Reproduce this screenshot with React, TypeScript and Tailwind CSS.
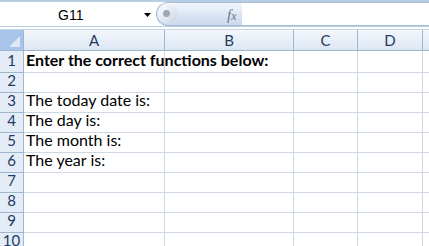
import React from "react";

const cols = [
  { name: "A", w: 141 },
  { name: "B", w: 129 },
  { name: "C", w: 64 },
  { name: "D", w: 65 },
  { name: "", w: 40 },
];

const rows: { n: number; text?: string; bold?: boolean; h: number }[] = [
  { n: 1, text: "Enter the correct functions below:", bold: true, h: 22 },
  { n: 2, h: 20 },
  { n: 3, text: "The today date is:", h: 20 },
  { n: 4, text: "The day is:", h: 20 },
  { n: 5, text: "The month is:", h: 20 },
  { n: 6, text: "The year is:", h: 20 },
  { n: 7, h: 20 },
  { n: 8, h: 20 },
  { n: 9, h: 20 },
  { n: 10, h: 20 },
];

export default function App() {
  return (
    <div className="w-[429px] h-[246px] overflow-hidden bg-white" style={{ fontFamily: "Lato, 'Open Sans', sans-serif" }}>
      {/* formula bar */}
      <div className="h-[29px] bg-white">
        <div className="h-[2px] bg-[#b8cce4]" />
        <div className="flex h-[24px] items-stretch">
          <div className="relative w-[156px] bg-white flex items-center">
            <span className="absolute left-[58px] top-[3px] text-[14px] text-black" style={{ fontFamily: "'Liberation Sans', Arial, sans-serif", fontSize: 14 }}>G11</span>
            <svg className="absolute left-[144px] top-[11px]" width="7" height="4" viewBox="0 0 7 4">
              <path d="M0 0 L7 0 L3.5 4 Z" fill="#000" />
            </svg>
          </div>
          <div className="relative w-[86px] rounded-l-[12px] bg-gradient-to-b from-[#f3f7fc] via-[#dde7f4] to-[#c9d8ec] border border-[#a7bcd6] border-r-0">
            <div className="absolute left-[1px] top-[1px] w-[20px] h-[20px] rounded-full bg-gradient-to-br from-[#ffffff] to-[#c7d3e2]" />
            <div className="absolute left-[6px] top-[7px] w-[7px] h-[7px] rounded-full bg-[#a0a8b4]" />
            <span className="absolute left-[70px] top-[1px] italic text-[15px] text-[#6b7787]" style={{ fontFamily: "'Liberation Serif', serif" }}>
              f<span className="text-[12px]">x</span>
            </span>
          </div>
          <div className="flex-1 bg-white border-t border-b border-[#a7bcd6]" />
        </div>
        <div className="h-[1px] bg-[#b8cce4]" />
      </div>

      {/* header row */}
      <div className="flex h-[22px] border-t border-[#c5d5e8]">
        <div className="relative w-[24px] shrink-0 bg-[#a9c4e9] border-r border-b border-[#9eb6ce]">
          <svg className="absolute right-[3px] bottom-[3px]" width="11" height="11" viewBox="0 0 11 11">
            <path d="M11 0 L11 11 L0 11 Z" fill="#dfe9f6" />
          </svg>
        </div>
        {cols.map((c, i) => (
          <div
            key={i}
            className="shrink-0 flex items-center justify-center bg-gradient-to-b from-[#f4f7fb] to-[#dce6f3] border-r border-b border-[#9eb6ce] text-[15px] text-[#1f3b63]"
            style={{ width: c.w }}
          >
            {c.name}
          </div>
        ))}
      </div>

      {/* rows */}
      {rows.map((r) => (
        <div key={r.n} className="flex" style={{ height: r.h }}>
          <div className="w-[24px] shrink-0 bg-[#e4ecf7] border-r border-b border-[#9eb6ce] flex items-end justify-center pb-[1px] text-[15px] text-[#1f3b63]">
            {r.n}
          </div>
          {cols.map((c, i) => (
            <div
              key={i}
              className="relative shrink-0 border-r border-b border-[#d0d7e5]"
              style={{ width: c.w }}
            >
              {i === 0 && r.text && (
                <span
                  className={`absolute left-[2px] bottom-[0px] whitespace-nowrap text-[16px] text-black ${r.bold ? "font-bold" : ""}`}
                >
                  {r.text}
                </span>
              )}
            </div>
          ))}
        </div>
      ))}
    </div>
  );
}
